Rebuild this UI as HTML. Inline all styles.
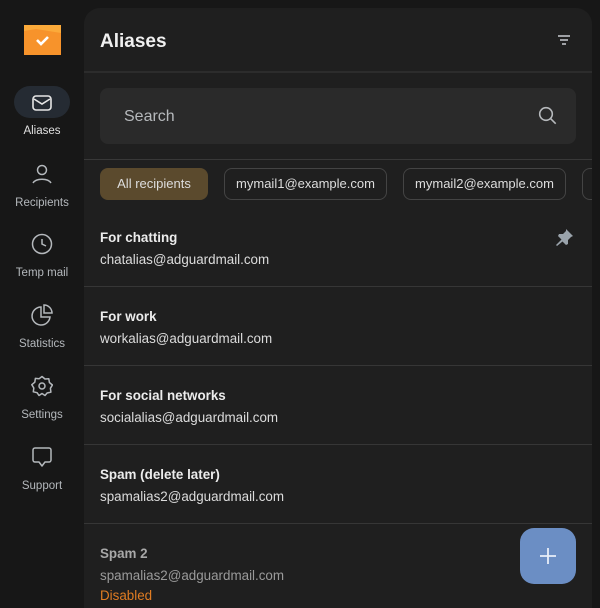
<!DOCTYPE html>
<html><head><meta charset="utf-8"><style>
*{margin:0;padding:0;box-sizing:border-box}
body{width:600px;height:600px;overflow:hidden;background:#171717;font-family:"Liberation Sans",sans-serif;position:relative;color:#e6e6e6}
.a{position:absolute}
.nav{position:absolute;left:0;width:84px;text-align:center;font-size:11.5px;color:#b4b8bc}
.nav svg{display:block;margin:0 auto 6px}
.panel{position:absolute;left:84px;top:8px;width:508px;height:600px;background:#1f1f1f;border-radius:16px 16px 0 0;overflow:hidden}
.hr{position:absolute;left:0;right:0;height:2px;background:#2c2c2c}
.chip{position:absolute;top:160px;height:32px;border:1px solid #444;border-radius:8px;font-size:13px;line-height:30px;padding:0 10px;color:#ddd;white-space:nowrap;text-align:center}
.row{position:absolute;left:16px;font-size:13.4px}
.row b{display:block;font-weight:bold;color:#ececec;margin-bottom:7px}
.row span{color:#dcdcdc}
.sep{position:absolute;left:0;right:0;height:1px;background:#363636}
</style></head><body>
<svg class="a" style="left:24px;top:25px" width="37" height="30" viewBox="0 0 37 30"><rect width="37" height="30" fill="#f7932b"/><path d="M0 0h37v8L12 4 0 6z" fill="#fbaa3a"/><path d="M13 15l4 4 7-7" stroke="#fff" stroke-width="2.6" fill="none"/></svg>
<div class="a" style="left:14px;top:86px;width:56px;height:32px;border-radius:16px;background:#252b33"></div>
<div class="nav" style="top:93px;color:#e0e0e0"><svg width="22" height="20" viewBox="0 0 22 20"><rect x="2" y="3" width="18" height="14" rx="3" fill="none" stroke="#e6e6e6" stroke-width="1.6"/><path d="M3 6l8 5 8-5" fill="none" stroke="#e6e6e6" stroke-width="1.6"/></svg><div style="margin-top:12px">Aliases</div></div>
<div class="nav" style="top:163px"><svg width="22" height="22" viewBox="0 0 22 22"><circle cx="11" cy="7" r="4.5" fill="none" stroke="#b4b8bc" stroke-width="1.5"/><path d="M2 20c3-5 15-5 18 0" fill="none" stroke="#b4b8bc" stroke-width="1.5"/></svg><div style="margin-top:12px">Recipients</div></div>
<div class="nav" style="top:233px"><svg width="22" height="22" viewBox="0 0 22 22"><circle cx="11" cy="11" r="9.5" fill="none" stroke="#b4b8bc" stroke-width="1.5"/><path d="M11 6v5l4 2" fill="none" stroke="#b4b8bc" stroke-width="1.5"/></svg><div style="margin-top:12px">Temp mail</div></div>
<div class="nav" style="top:304px"><svg width="22" height="22" viewBox="0 0 22 22"><path d="M10 3a9 9 0 1 0 9 10h-9z" fill="none" stroke="#b4b8bc" stroke-width="1.5"/><path d="M13 1a8 8 0 0 1 8 8h-8z" fill="none" stroke="#b4b8bc" stroke-width="1.5"/></svg><div style="margin-top:12px">Statistics</div></div>
<div class="nav" style="top:375px"><svg width="22" height="22" viewBox="0 0 22 22"><path d="M11 1.5l3 2.5 3.8-.3.6 3.8 3 2.5-2 3.3.5 3.8-3.8.9L14 20.5 11 18.5 8 20.5 6.1 17.7l-3.8-.9.5-3.8-2-3.3 3-2.5.6-3.8 3.8.3z" fill="none" stroke="#b4b8bc" stroke-width="1.5" stroke-linejoin="round"/><circle cx="11" cy="11" r="3" fill="none" stroke="#b4b8bc" stroke-width="1.5"/></svg><div style="margin-top:12px">Settings</div></div>
<div class="nav" style="top:446px"><svg width="22" height="22" viewBox="0 0 22 22"><path d="M4 2h14a2 2 0 0 1 2 2v10a2 2 0 0 1-2 2h-4l-3 4-3-4H4a2 2 0 0 1-2-2V4a2 2 0 0 1 2-2z" fill="none" stroke="#b4b8bc" stroke-width="1.5" stroke-linejoin="round"/></svg><div style="margin-top:12px">Support</div></div>

<div class="panel">
<div class="a" style="left:16px;top:23px;font-size:19px;font-weight:bold;color:#f0f0f0">Aliases</div>
<svg class="a" style="left:472px;top:26px" width="16" height="14" viewBox="0 0 16 14"><path d="M2 2h12M4 6h8M6 10h4" stroke="#c8ccd0" stroke-width="1.5"/></svg>
<div class="hr" style="top:63px"></div>
<div class="a" style="left:16px;top:80px;width:476px;height:56px;background:#2a2a2a;border-radius:8px"></div>
<div class="a" style="left:40px;top:100px;font-size:16px;color:#b6b9bc">Search</div>
<svg class="a" style="left:454px;top:98px" width="20" height="20" viewBox="0 0 20 20"><circle cx="8" cy="8" r="6.3" fill="none" stroke="#b6b9bc" stroke-width="1.6"/><path d="M12.7 12.7l5 5" stroke="#b6b9bc" stroke-width="1.6"/></svg>
<div class="hr" style="top:151px;height:1px;background:#383838"></div>
<div class="chip" style="left:16px;width:108px;background:#5b4a2d;border-color:#5b4a2d;padding:0">All recipients</div>
<div class="chip" style="left:140px;width:163px;padding:0">mymail1@example.com</div>
<div class="chip" style="left:319px;width:163px;padding:0">mymail2@example.com</div>
<div class="chip" style="left:498px;width:40px"></div>
<svg class="a" style="left:470px;top:220px" width="20" height="20" viewBox="0 0 20 20"><path d="M12 1l7 7-2 1-3 3 0 4-2 1-3.5-3.5L3 18l-1-1 5.5-5.5L4 8l1-2h4l3-3z" fill="#9aa3ab"/></svg>
<div class="row" style="top:222px"><b>For chatting</b><span>chatalias@adguardmail.com</span></div>
<div class="sep" style="top:278px"></div>
<div class="row" style="top:301px"><b>For work</b><span>workalias@adguardmail.com</span></div>
<div class="sep" style="top:357px"></div>
<div class="row" style="top:380px"><b>For social networks</b><span>socialalias@adguardmail.com</span></div>
<div class="sep" style="top:436px"></div>
<div class="row" style="top:459px"><b>Spam (delete later)</b><span>spamalias2@adguardmail.com</span></div>
<div class="sep" style="top:515px"></div>
<div class="row" style="top:538px"><b style="color:#a8a8a8">Spam 2</b><span style="color:#9a9a9a">spamalias2@adguardmail.com</span><div style="color:#e07c22;margin-top:5px">Disabled</div></div>
</div>
<div class="a" style="left:520px;top:528px;width:56px;height:56px;border-radius:14px;background:#6b8ec4"></div>
<svg class="a" style="left:540px;top:548px" width="16" height="16" viewBox="0 0 16 16"><path d="M8 0v16M0 8h16" stroke="#e8eef8" stroke-width="1.8"/></svg>
</body></html>
